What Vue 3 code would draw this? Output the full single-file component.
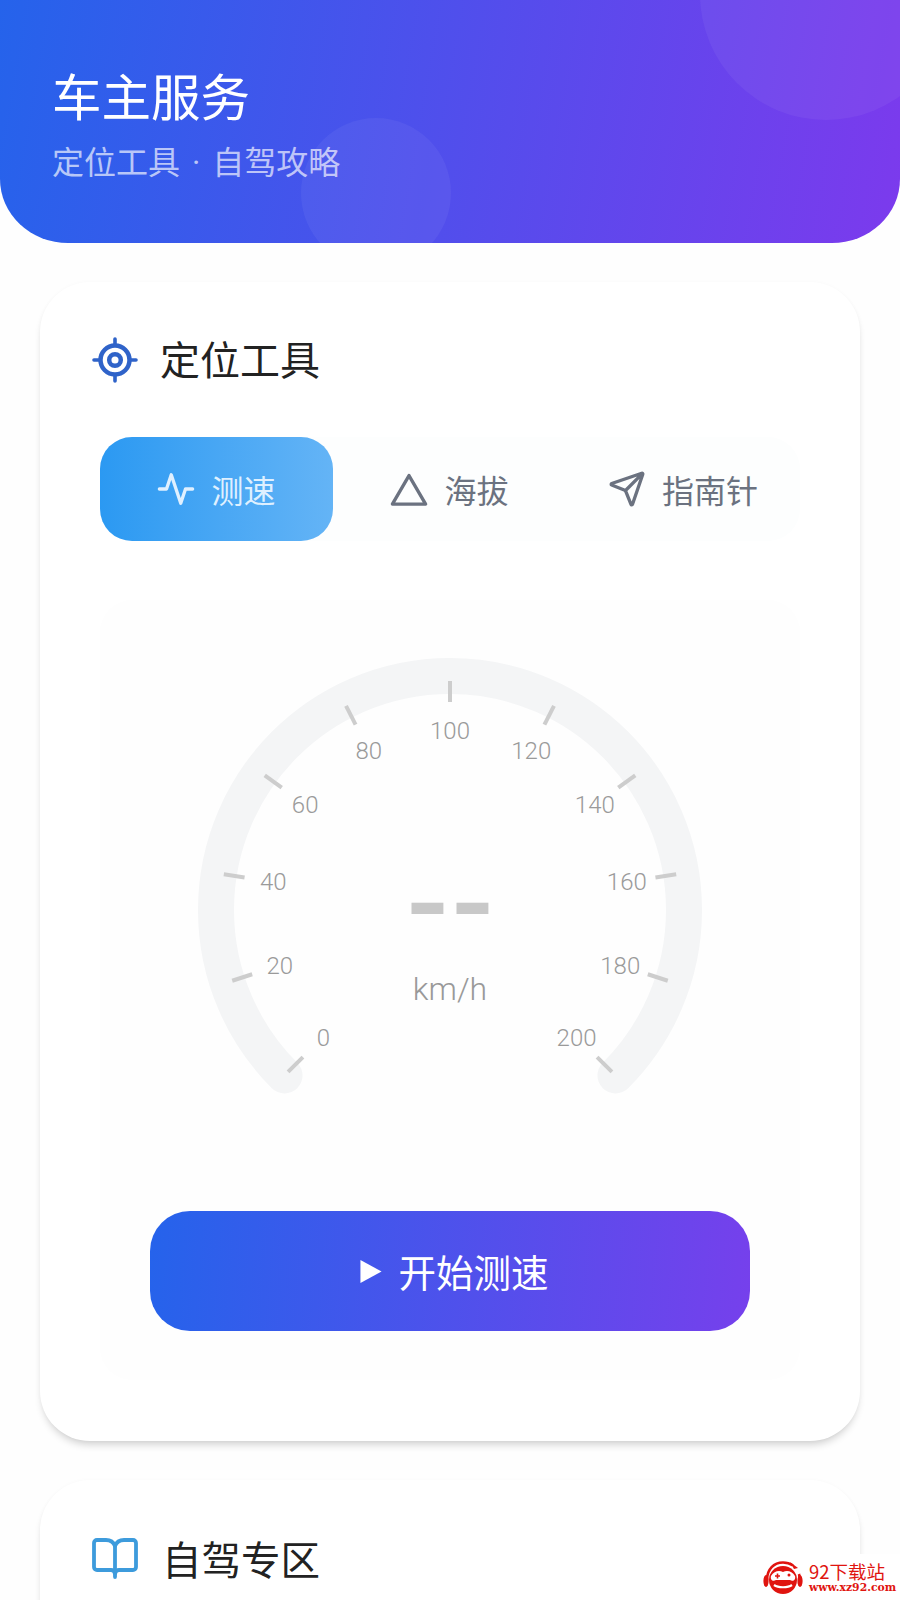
<template>
  <div class="page">
    <header class="hero">
      <span class="bubble bubbleBig"></span>
      <span class="bubble bubbleSmall"></span>
      <h1 class="heroTitle">车主服务</h1>
      <p class="heroSub">定位工具 · 自驾攻略</p>
    </header>

    <section class="card toolCard">
      <div class="cardTitle">
        <svg class="titleIcon" viewBox="0 0 46 46" fill="none" stroke="#2f63c9">
          <circle cx="23" cy="23" r="14.5" stroke-width="4.5" />
          <circle cx="23" cy="23" r="5.8" stroke-width="4.5" />
          <path d="M23 2v6M23 38v6M2 23h6M38 23h6" stroke-width="3.6" stroke-linecap="round" />
        </svg>
        <span class="titleText">定位工具</span>
      </div>

      <div class="tabs">
        <button v-for="tab in tabs" :key="tab.name" class="tab" :class="{ tabActive: tab.name === activeTab }">
          <svg class="tabIcon" viewBox="0 0 24 24" fill="none" stroke="currentColor" stroke-width="2.100" stroke-linecap="round" stroke-linejoin="round">
            <path :d="tab.icon" />
          </svg>
          <span>{{ tab.name }}</span>
        </button>
      </div>

      <div class="panel">
        <div class="gauge">
          <svg class="gaugeSvg" viewBox="0 0 700 520" width="700" height="520">
            <path :d="trackPath" fill="none" stroke="#f4f5f6" stroke-width="36" stroke-linecap="round" />
            <line
              v-for="t in marks"
              :key="'tick' + t.value"
              :x1="t.x1"
              :y1="t.y1"
              :x2="t.x2"
              :y2="t.y2"
              stroke="#cdcdcd"
              stroke-width="4"
            />
            <text
              v-for="t in marks"
              :key="'label' + t.value"
              class="markLabel"
              :x="t.lx"
              :y="t.ly"
              text-anchor="middle"
              dominant-baseline="central"
            >{{ t.value }}</text>
          </svg>
          <div class="speedValue">--</div>
          <div class="speedUnit">km/h</div>
        </div>
        <button class="startBtn">
          <svg class="playIcon" viewBox="0 0 22 24"><path d="M0 0L22 12L0 24Z" fill="#fff" /></svg>
          <span class="startText">开始测速</span>
        </button>
      </div>
    </section>

    <section class="card driveCard">
      <div class="cardTitle">
        <svg class="titleIcon bookIcon" viewBox="0 0 46 42" fill="none" stroke="#3d9bdc" stroke-width="3.800" stroke-linejoin="round" stroke-linecap="round">
          <path d="M23 8C21.500 4 18 2 14 2H5C3.300 2 2 3.300 2 5V29C2 30.700 3.300 32 5 32H19C21 32 22.500 33.500 23 36C23.500 33.500 25 32 27 32H41C42.700 32 44 30.700 44 29V5C44 3.300 42.700 2 41 2H32C28 2 24.500 4 23 8Z" />
          <path d="M23 8V39" />
        </svg>
        <span class="titleText">自驾专区</span>
      </div>
    </section>

    <div class="watermark">
      <svg class="wmLogo" viewBox="0 0 40 34">
        <path d="M4 20C4 9 11 2.500 20 2.500C24 2.500 27 3.500 30 5.500" fill="none" stroke="#e0140f" stroke-width="2.600" />
        <path d="M27 2L35 8L31 9Z" fill="#e0140f" />
        <path d="M36 14C37 17 37 21 36 24" fill="none" stroke="#e0140f" stroke-width="2.600" />
        <ellipse cx="3" cy="21" rx="2.600" ry="6" fill="#e0140f" />
        <ellipse cx="37" cy="21" rx="2.600" ry="6" fill="#e0140f" />
        <circle cx="20" cy="20" r="14" fill="#e0140f" />
        <path d="M8 16C11 11 16 10 20 12C24 10 29 11 32 16C33 20 30 22 27 20H13C10 22 7 20 8 16Z" fill="#fff" />
        <path d="M12 16h5M14.500 13.500v5" stroke="#e0140f" stroke-width="1.600" />
        <circle cx="26" cy="15" r="1.500" fill="#e0140f" />
        <path d="M11 25C15 28 25 28 29 25" fill="none" stroke="#fff" stroke-width="2.200" />
      </svg>
      <div class="wmText">
        <div class="wmName">92下载站</div>
        <div class="wmUrl">www.xz92.com</div>
      </div>
    </div>
  </div>
</template>

<script setup>
import { computed, ref } from 'vue';

const activeTab = ref('测速');

const tabs = [
  { name: '测速', icon: 'M1.500 12h4.500l3-9 6 18 3-9h4.500' },
  { name: '海拔', icon: 'M12 3.500L22.500 21.500H1.500Z' },
  {
    name: '指南针',
    icon: 'M14.536 21.686a.5.5 0 0 0 .937-.024l6.500-19a.496.496 0 0 0-.635-.635l-19 6.500a.5.5 0 0 0-.024.937l7.930 3.180a2 2 0 0 1 1.112 1.110zM21.854 2.147l-10.940 10.939',
  },
];

// gauge centre inside the svg, 0 sits 135deg left of top, 200 the same to the right
const cx = 350;
const cy = 310;

const polar = (deg, r) => {
  const rad = (deg * Math.PI) / 180;
  return [cx + Math.sin(rad) * r, cy - Math.cos(rad) * r];
};

const trackPath = computed(() => {
  const [sx, sy] = polar(-135, 234);
  const [ex, ey] = polar(135, 234);
  return `M${sx} ${sy}A234 234 0 1 1 ${ex} ${ey}`;
});

const marks = computed(() => {
  const list = [];
  for (let v = 0; v <= 200; v += 20) {
    const deg = -135 + (v / 200) * 270;
    const [x1, y1] = polar(deg, 229);
    const [x2, y2] = polar(deg, 208);
    const [lx, ly] = polar(deg, 179);
    list.push({ value: v, x1, y1, x2, y2, lx, ly: v < 40 || v > 160 ? ly + 1 : ly });
  }
  return list;
});
</script>

<style>
html,
body {
  margin: 0;
  background: #fff;
}
</style>

<style scoped>
.page {
  position: relative;
  height: 1600px;
  overflow: hidden;
  background: #fefefe;
  font-family: "Noto Sans CJK SC", "Noto Sans", sans-serif;
}

.hero {
  position: relative;
  height: 243px;
  box-sizing: border-box;
  padding: 59px 0 0 52px;
  overflow: hidden;
  color: #fff;
  background: linear-gradient(100deg, #2563eb, #7c3aed);
  border-radius: 0 0 68px 68px / 0 0 64px 64px;
}

.bubble {
  position: absolute;
  border-radius: 50%;
  background: rgba(255, 255, 255, 0.05);
}

.bubbleBig {
  width: 252px;
  height: 252px;
  left: 700px;
  top: -132px;
}

.bubbleSmall {
  width: 150px;
  height: 150px;
  left: 301px;
  top: 118px;
}

.heroTitle {
  position: relative;
  margin: 0;
  font-size: 49.500px;
  font-weight: 400;
  line-height: 72px;
}

.heroSub {
  position: relative;
  margin: 9px 0 0;
  font-family: Roboto, "Noto Sans CJK SC", sans-serif;
  font-size: 32px;
  line-height: 46px;
  word-spacing: 4px;
  color: rgba(255, 255, 255, 0.66);
}

.card {
  margin: 39px 40px 0;
  background: #fff;
  border-radius: 50px;
  box-shadow: 0 6px 8px -3px rgba(0, 0, 0, 0.2), 0 0 4px rgba(0, 0, 0, 0.025);
}

.toolCard {
  height: 1159px;
  box-sizing: border-box;
  padding: 54px 60px 0;
}

.driveCard {
  height: 300px;
  box-sizing: border-box;
  padding: 55px 60px 0;
}

.cardTitle {
  display: flex;
  align-items: center;
  gap: 22px;
  height: 48px;
  margin-left: -8px;
  font-size: 40px;
  color: #222;
}

.titleText {
  padding-bottom: 4px;
}

.titleIcon {
  width: 46px;
  height: 46px;
  flex: none;
}

.bookIcon {
  height: 42px;
}

.driveCard .cardTitle {
  gap: 24px;
  font-size: 39.500px;
}

.tabs {
  display: grid;
  grid-template-columns: 233px 233px 234px;
  margin-top: 53px;
  background: #fdfefe;
  border-radius: 32px;
}

.tab {
  display: flex;
  align-items: center;
  justify-content: center;
  gap: 16px;
  height: 104px;
  padding: 0;
  border: none;
  border-radius: 32px;
  background: transparent;
  color: #6b7280;
  font-family: inherit;
  font-size: 32px;
}

.tabActive {
  color: #dff0ff;
  background: linear-gradient(90deg, #2b99f2, #64b4f6);
}

.tabIcon {
  width: 38px;
  height: 38px;
  flex: none;
}

.panel {
  height: 780px;
  box-sizing: border-box;
  margin-top: 59px;
  background: #fefefe;
  border-radius: 32px;
}

.gauge {
  position: relative;
  height: 520px;
}

.gaugeSvg {
  display: block;
}

.markLabel {
  font-family: Roboto, sans-serif;
  font-size: 24px;
  font-weight: 300;
  fill: #9a9a9a;
}

.speedValue {
  position: absolute;
  left: 0;
  right: 0;
  top: 254px;
  text-align: center;
  font-family: Inter, sans-serif;
  font-size: 96px;
  font-weight: 700;
  line-height: 96px;
  color: #c8c8c8;
}

.speedUnit {
  position: absolute;
  left: 0;
  right: 0;
  top: 370px;
  text-align: center;
  font-family: Roboto, sans-serif;
  font-size: 32px;
  font-weight: 300;
  line-height: 38px;
  color: #999;
}

.startBtn {
  display: flex;
  align-items: center;
  justify-content: center;
  gap: 17px;
  width: 600px;
  height: 120px;
  margin: 91px 0 0 50px;
  padding: 0 0 0 8px;
  box-sizing: border-box;
  border: none;
  border-radius: 40px;
  background: linear-gradient(95deg, #2563eb, #7640ec);
  color: #fff;
  font-family: inherit;
  font-size: 37.500px;
}

.startText {
  padding-bottom: 2px;
}

.playIcon {
  width: 22px;
  height: 23px;
  flex: none;
}

.watermark {
  position: absolute;
  right: 0;
  bottom: 0;
  display: flex;
  align-items: center;
  gap: 6px;
  width: 140px;
  height: 46px;
  padding-left: 3px;
  box-sizing: border-box;
  background: #fff;
}

.wmLogo {
  width: 40px;
  height: 34px;
  flex: none;
}

.wmName {
  font-size: 18.500px;
  line-height: 22px;
  color: #e0140f;
  white-space: nowrap;
}

.wmUrl {
  font-family: "DejaVu Serif", serif;
  font-size: 10.800px;
  font-weight: 700;
  line-height: 12px;
  color: #e0140f;
  white-space: nowrap;
}
</style>
